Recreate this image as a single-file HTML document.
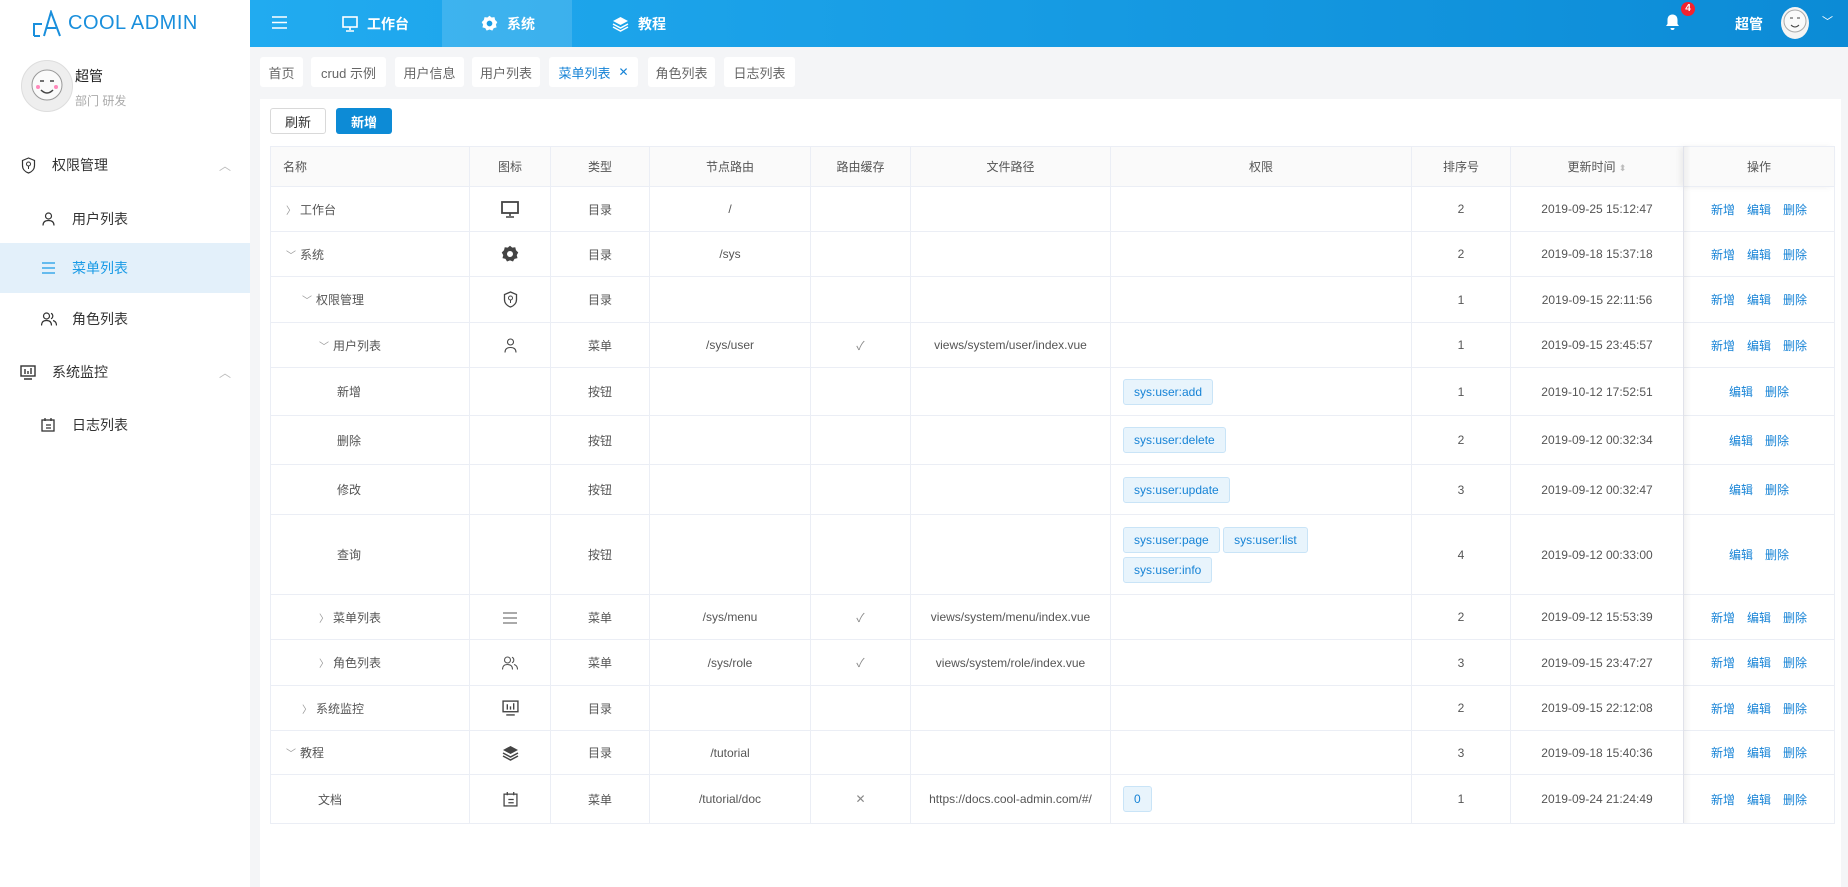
<!DOCTYPE html>
<html><head><meta charset="utf-8">
<style>
*{box-sizing:border-box;margin:0;padding:0}
body{width:1848px;height:887px;overflow:hidden;background:#f4f5f7;font-family:"Liberation Sans","Noto Sans CJK SC",sans-serif;color:#333;position:relative}
.abs{position:absolute}
#side{left:0;top:0;width:250px;height:887px;background:#fff}
#hdr{left:250px;top:0;width:1598px;height:47px;background:linear-gradient(90deg,#21abf0,#0c8bd6)}
.hd{color:#fff;font-size:14px;font-weight:bold;display:flex;align-items:center;height:47px}
.mi{position:absolute;left:0;width:250px;height:50px;display:flex;align-items:center;font-size:14px;color:#333}
.tab{position:absolute;top:57px;height:30px;background:#fff;border-radius:3px;font-size:13px;color:#666;display:flex;align-items:center;justify-content:center}
#card{left:260px;top:99px;width:1581px;height:788px;background:#fff}
.btn{position:absolute;top:108px;height:26px;width:56px;border-radius:3px;font-size:13px;display:flex;align-items:center;justify-content:center}
table{position:absolute;left:270px;top:146px;border-collapse:collapse;table-layout:fixed;width:1564px;font-size:12px;color:#555}
td,th{border:1px solid #ebeef5;text-align:center;vertical-align:middle;padding:0}
th{height:40px;background:#fafafa;font-weight:normal;color:#555}
td.n{text-align:left}
.tag{display:inline-block;height:26px;line-height:24px;padding:0 10px;background:#e8f4fc;border:1px solid #c9e4f7;border-radius:3px;color:#1683d6;font-size:12px;margin:2px 0}
.op a{color:#1683d6;text-decoration:none;margin:0 6px}
.ar{display:inline-block;width:14px;color:#999;font-size:10px}
svg{vertical-align:middle}
</style></head><body>
<div id="side" class="abs">
  <svg class="abs" style="left:32px;top:10px" width="30" height="27" viewBox="0 0 30 27"><path d="M2 26V14h8M2 26h6M12 26L19 2l9 24M15 18h9" fill="none" stroke="#1a8fdc" stroke-width="2"/></svg>
  <div class="abs" style="left:68px;top:12px;font-size:20px;color:#1a8fdc;letter-spacing:0.5px">COOL ADMIN</div>
  <div class="abs" style="left:21px;top:60px;width:52px;height:52px;border-radius:50%;background:#eee;border:1px solid #ddd"><svg width="50" height="50" viewBox="0 0 50 50"><circle cx="25" cy="24" r="15" fill="#fafafa" stroke="#999"/><path d="M18 20h4M28 20h4M19 29q6 6 12 0" stroke="#444" fill="none" stroke-width="1.5"/><circle cx="16" cy="26" r="2" fill="#f8b"/><circle cx="34" cy="26" r="2" fill="#f8b"/></svg></div>
  <div class="abs" style="left:75px;top:66px;font-size:14px;color:#222">超管</div>
  <div class="abs" style="left:75px;top:92px;font-size:12px;color:#aaa">部门 研发</div>
  <div class="mi" style="top:140px"><svg style="position:absolute;left:21px" width="15" height="17" viewBox="0 0 15 17"><path d="M7.5 1L1.5 3.5v5c0 4 3 6.5 6 7.5 3-1 6-3.5 6-7.5v-5z" fill="none" stroke="#333" stroke-width="1.2"/><circle cx="7.5" cy="7" r="2" fill="none" stroke="#333"/><path d="M7.5 9v3" stroke="#333"/></svg><span style="position:absolute;left:52px">权限管理</span><span style="position:absolute;left:219px;color:#bbb;font-size:12px">︿</span></div>
  <div class="mi" style="top:194px"><svg style="position:absolute;left:42px" width="13" height="14" viewBox="0 0 13 14"><circle cx="6.5" cy="4" r="3" fill="none" stroke="#333" stroke-width="1.2"/><path d="M1 13.5q0-5 5.5-5t5.5 5" fill="none" stroke="#333" stroke-width="1.2"/></svg><span style="position:absolute;left:72px">用户列表</span></div>
  <div class="mi" style="top:243px;background:#e3f0fa;color:#1a9be6"><svg style="position:absolute;left:42px" width="13" height="12" viewBox="0 0 13 12"><path d="M0 1h13M0 6h13M0 11h13" stroke="#1a9be6" stroke-width="1.2"/></svg><span style="position:absolute;left:72px">菜单列表</span></div>
  <div class="mi" style="top:294px"><svg style="position:absolute;left:41px" width="16" height="14" viewBox="0 0 16 14"><circle cx="5.5" cy="4" r="3" fill="none" stroke="#333" stroke-width="1.2"/><path d="M0.5 13.5q0-5 5-5t5 5M10 1.3a3 3 0 010 5.5M12 8.5q3.5 1 3.5 5" fill="none" stroke="#333" stroke-width="1.2"/></svg><span style="position:absolute;left:72px">角色列表</span></div>
  <div class="mi" style="top:347px"><svg style="position:absolute;left:20px" width="16" height="15" viewBox="0 0 16 15"><rect x="1" y="1" width="14" height="10" fill="none" stroke="#333" stroke-width="1.4"/><path d="M5 4v5M8 6v3M11 3v6M4 14h8" stroke="#333" stroke-width="1.4"/></svg><span style="position:absolute;left:52px">系统监控</span><span style="position:absolute;left:219px;color:#bbb;font-size:12px">︿</span></div>
  <div class="mi" style="top:400px"><svg style="position:absolute;left:41px" width="14" height="14" viewBox="0 0 14 14"><rect x="1" y="2" width="12" height="11" fill="none" stroke="#333" stroke-width="1.3"/><path d="M4 0v3M10 0v3M5 7h5M5 10h5" stroke="#333" stroke-width="1.3"/></svg><span style="position:absolute;left:72px">日志列表</span></div>
</div>
<div id="hdr" class="abs">
  <svg class="abs" style="left:22px;top:16px" width="15" height="13" viewBox="0 0 15 13"><path d="M0 1h15M0 6.5h15M0 12h15" stroke="#fff" stroke-width="1.6"/></svg>
  <div class="hd abs" style="left:92px"><svg width="16" height="16" viewBox="0 0 16 16"><rect x="1" y="1" width="14" height="10" fill="none" stroke="#fff" stroke-width="1.6"/><path d="M8 11v3M4 15h8" stroke="#fff" stroke-width="1.6"/></svg><span style="margin-left:9px">工作台</span></div>
  <div class="abs" style="left:192px;top:0;width:130px;height:47px;background:rgba(255,255,255,0.14)"></div>
  <div class="hd abs" style="left:231px"><svg width="17" height="17" viewBox="0 0 24 24"><path fill="#fff" d="M12 1l3 2.5 4-.5 1 4 3 3-2 3.5 1 4-4 1-2 3.5-4-1.5-4 1.5-2-3.5-4-1 1-4-2-3.5 3-3 1-4 4 .5z"/><circle cx="12" cy="12" r="4" fill="#1a9de4"/></svg><span style="margin-left:9px">系统</span></div>
  <div class="hd abs" style="left:362px"><svg width="17" height="16" viewBox="0 0 17 16"><path d="M8.5 1L1 5l7.5 4L16 5z" fill="#fff"/><path d="M1 8l7.5 4L16 8M1 11l7.5 4 7.5-4" fill="none" stroke="#fff" stroke-width="1.5"/></svg><span style="margin-left:9px">教程</span></div>
  <svg class="abs" style="left:1414px;top:13px" width="17" height="18" viewBox="0 0 17 18"><path d="M8.5 1.5c-3.5 0-5 2.5-5 5.5v4L2 13h13l-1.5-2V7c0-3-1.5-5.5-5-5.5z" fill="#fff"/><path d="M6.5 15a2 2 0 004 0z" fill="#fff"/></svg>
  <div class="abs" style="left:1431px;top:2px;width:14px;height:14px;border-radius:50%;background:#f5222d;color:#fff;font-size:10px;font-weight:bold;text-align:center;line-height:14px">4</div>
  <div class="hd abs" style="left:1485px">超管</div>
  <div class="abs" style="left:1531px;top:7px;width:28px;height:32px;border-radius:50%;background:#f4f4f4"><svg width="28" height="32" viewBox="0 0 28 32"><circle cx="14" cy="14" r="11" fill="#fafafa" stroke="#aaa"/><path d="M9 11h3M16 11h3M10 18q4 4 8 0" stroke="#444" fill="none"/></svg></div>
  <div class="abs" style="left:1572px;top:13px;color:#fff;font-size:11px">﹀</div>
</div>
<div class="tab" style="left:260px;width:43px">首页</div>
<div class="tab" style="left:311px;width:75px">crud 示例</div>
<div class="tab" style="left:395px;width:69px">用户信息</div>
<div class="tab" style="left:472px;width:68px">用户列表</div>
<div class="tab" style="left:549px;width:89px;color:#1683d6">菜单列表<span style="margin-left:8px;font-size:12px">✕</span></div>
<div class="tab" style="left:648px;width:67px">角色列表</div>
<div class="tab" style="left:724px;width:71px">日志列表</div>
<div id="card" class="abs"></div>
<div class="btn" style="left:270px;border:1px solid #d9d9d9;color:#333;background:#fff">刷新</div>
<div class="btn" style="left:336px;background:#0d8bd6;color:#fff;font-weight:bold">新增</div>
<table>
<colgroup><col style="width:199px"><col style="width:81px"><col style="width:99px"><col style="width:161px"><col style="width:100px"><col style="width:200px"><col style="width:301px"><col style="width:99px"><col style="width:173px"><col style="width:151px"></colgroup>
<tr><th style="text-align:left;padding-left:12px">名称</th><th>图标</th><th>类型</th><th>节点路由</th><th>路由缓存</th><th>文件路径</th><th>权限</th><th>排序号</th><th>更新时间 <span style="color:#bbb;font-size:9px">⬍</span></th><th style="box-shadow:-4px 0 6px rgba(0,0,0,0.06)">操作</th></tr>
<tr style="height:45px"><td class="n" style="padding-left:15px"><span class="ar">〉</span>工作台</td><td><svg width="18" height="17" viewBox="0 0 18 17"><rect x="1" y="1" width="16" height="11" fill="none" stroke="#444" stroke-width="1.8"/><path d="M9 12v3M5 16h8" stroke="#444" stroke-width="1.6"/></svg></td><td>目录</td><td>/</td><td></td><td></td><td></td><td>2</td><td>2019-09-25 15:12:47</td><td class="op"><a>新增</a><a>编辑</a><a>删除</a></td></tr>
<tr style="height:45px"><td class="n" style="padding-left:15px"><span class="ar">﹀</span>系统</td><td><svg width="18" height="18" viewBox="0 0 24 24"><path fill="#444" d="M12 1l3 2.5 4-.5 1 4 3 3-2 3.5 1 4-4 1-2 3.5-4-1.5-4 1.5-2-3.5-4-1 1-4-2-3.5 3-3 1-4 4 .5z"/><circle cx="12" cy="12" r="4" fill="#fff"/></svg></td><td>目录</td><td>/sys</td><td></td><td></td><td></td><td>2</td><td>2019-09-18 15:37:18</td><td class="op"><a>新增</a><a>编辑</a><a>删除</a></td></tr>
<tr style="height:46px"><td class="n" style="padding-left:31px"><span class="ar">﹀</span>权限管理</td><td><svg width="15" height="17" viewBox="0 0 15 17"><path d="M7.5 1L1.5 3.5v5c0 4 3 6.5 6 7.5 3-1 6-3.5 6-7.5v-5z" fill="none" stroke="#444" stroke-width="1.3"/><circle cx="7.5" cy="7" r="2" fill="none" stroke="#444"/><path d="M7.5 9v3" stroke="#444"/></svg></td><td>目录</td><td></td><td></td><td></td><td></td><td>1</td><td>2019-09-15 22:11:56</td><td class="op"><a>新增</a><a>编辑</a><a>删除</a></td></tr>
<tr style="height:45px"><td class="n" style="padding-left:48px"><span class="ar">﹀</span>用户列表</td><td><svg width="13" height="15" viewBox="0 0 13 15"><circle cx="6.5" cy="4" r="3" fill="none" stroke="#444" stroke-width="1.1"/><path d="M1 14.5q0-5 5.5-5t5.5 5" fill="none" stroke="#444" stroke-width="1.1"/></svg></td><td>菜单</td><td>/sys/user</td><td style="color:#888">✓</td><td>views/system/user/index.vue</td><td></td><td>1</td><td>2019-09-15 23:45:57</td><td class="op"><a>新增</a><a>编辑</a><a>删除</a></td></tr>
<tr style="height:48px"><td class="n" style="padding-left:66px">新增</td><td></td><td>按钮</td><td></td><td></td><td></td><td style="text-align:left;padding-left:12px"><span class="tag">sys:user:add</span></td><td>1</td><td>2019-10-12 17:52:51</td><td class="op"><a>编辑</a><a>删除</a></td></tr>
<tr style="height:49px"><td class="n" style="padding-left:66px">删除</td><td></td><td>按钮</td><td></td><td></td><td></td><td style="text-align:left;padding-left:12px"><span class="tag">sys:user:delete</span></td><td>2</td><td>2019-09-12 00:32:34</td><td class="op"><a>编辑</a><a>删除</a></td></tr>
<tr style="height:50px"><td class="n" style="padding-left:66px">修改</td><td></td><td>按钮</td><td></td><td></td><td></td><td style="text-align:left;padding-left:12px"><span class="tag">sys:user:update</span></td><td>3</td><td>2019-09-12 00:32:47</td><td class="op"><a>编辑</a><a>删除</a></td></tr>
<tr style="height:80px"><td class="n" style="padding-left:66px">查询</td><td></td><td>按钮</td><td></td><td></td><td></td><td style="text-align:left;padding-left:12px"><span class="tag">sys:user:page</span> <span class="tag">sys:user:list</span><br><span class="tag">sys:user:info</span></td><td>4</td><td>2019-09-12 00:33:00</td><td class="op"><a>编辑</a><a>删除</a></td></tr>
<tr style="height:45px"><td class="n" style="padding-left:48px"><span class="ar">〉</span>菜单列表</td><td><svg width="14" height="12" viewBox="0 0 14 12"><path d="M0 1h14M0 6h14M0 11h14" stroke="#555" stroke-width="1.1"/></svg></td><td>菜单</td><td>/sys/menu</td><td style="color:#888">✓</td><td>views/system/menu/index.vue</td><td></td><td>2</td><td>2019-09-12 15:53:39</td><td class="op"><a>新增</a><a>编辑</a><a>删除</a></td></tr>
<tr style="height:46px"><td class="n" style="padding-left:48px"><span class="ar">〉</span>角色列表</td><td><svg width="16" height="14" viewBox="0 0 16 14"><circle cx="5.5" cy="4" r="3" fill="none" stroke="#555" stroke-width="1.1"/><path d="M0.5 13.5q0-5 5-5t5 5M10 1.3a3 3 0 010 5.5M12 8.5q3.5 1 3.5 5" fill="none" stroke="#555" stroke-width="1.1"/></svg></td><td>菜单</td><td>/sys/role</td><td style="color:#888">✓</td><td>views/system/role/index.vue</td><td></td><td>3</td><td>2019-09-15 23:47:27</td><td class="op"><a>新增</a><a>编辑</a><a>删除</a></td></tr>
<tr style="height:45px"><td class="n" style="padding-left:31px"><span class="ar">〉</span>系统监控</td><td><svg width="17" height="16" viewBox="0 0 16 15"><rect x="1" y="1" width="14" height="10" fill="none" stroke="#444" stroke-width="1.3"/><path d="M5 4v5M8 6v3M11 3v6M4 14h8" stroke="#444" stroke-width="1.3"/></svg></td><td>目录</td><td></td><td></td><td></td><td></td><td>2</td><td>2019-09-15 22:12:08</td><td class="op"><a>新增</a><a>编辑</a><a>删除</a></td></tr>
<tr style="height:44px"><td class="n" style="padding-left:15px"><span class="ar">﹀</span>教程</td><td><svg width="17" height="16" viewBox="0 0 17 16"><path d="M8.5 1L1 5l7.5 4L16 5z" fill="#444"/><path d="M1 8l7.5 4L16 8M1 11l7.5 4 7.5-4" fill="none" stroke="#444" stroke-width="1.5"/></svg></td><td>目录</td><td>/tutorial</td><td></td><td></td><td></td><td>3</td><td>2019-09-18 15:40:36</td><td class="op"><a>新增</a><a>编辑</a><a>删除</a></td></tr>
<tr style="height:49px"><td class="n" style="padding-left:47px">文档</td><td><svg width="15" height="15" viewBox="0 0 14 14"><rect x="1" y="2" width="12" height="11" fill="none" stroke="#444" stroke-width="1.2"/><path d="M4 0v3M10 0v3M5 7h5M5 10h5" stroke="#444" stroke-width="1.2"/></svg></td><td>菜单</td><td>/tutorial/doc</td><td style="color:#888">✕</td><td>https://docs.cool-admin.com/#/</td><td style="text-align:left;padding-left:12px"><span class="tag">0</span></td><td>1</td><td>2019-09-24 21:24:49</td><td class="op"><a>新增</a><a>编辑</a><a>删除</a></td></tr>
</table>
<div class="abs" style="left:1683px;top:146px;width:8px;height:677px;background:linear-gradient(90deg,rgba(0,0,0,0.05),rgba(0,0,0,0))"></div>
</body></html>
